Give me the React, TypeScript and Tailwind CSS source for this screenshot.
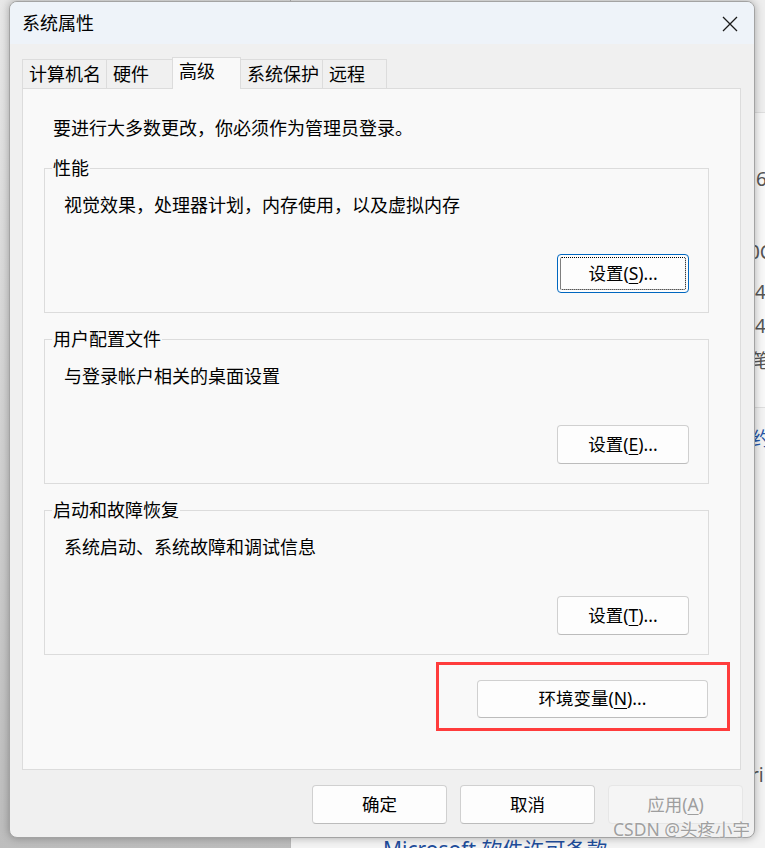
import type { ReactNode } from 'react';

const font = "font-['Noto_Sans','Noto_Sans_CJK_SC',sans-serif]";

const tabs = [
  { label: '计算机名', width: 'w-[85px]' },
  { label: '硬件', width: 'w-[67px]' },
  { label: '高级', width: 'w-[69px]', active: true },
  { label: '系统保护', width: 'w-[83px]' },
  { label: '远程', width: 'w-[65px]' },
];

function Key({ children }: { children: ReactNode }) {
  return <span className="underline decoration-1 underline-offset-[3px]">{children}</span>;
}

function WinButton({
  children,
  className = '',
  focused,
  disabled,
}: {
  children: ReactNode;
  className?: string;
  focused?: boolean;
  disabled?: boolean;
}) {
  const tone = disabled
    ? 'bg-[#f5f5f5] border-[#e6e6e6] text-[#9e9e9e]'
    : focused
      ? 'bg-[#fdfdfd] border-[#0067c0] text-black'
      : 'bg-[#fdfdfd] border-[#d0d0d0] border-b-[#bcbcbc] text-black';
  return (
    <div
      className={`relative flex items-center justify-center rounded-[4px] border text-[17.5px] leading-none ${tone} ${className}`}
    >
      {focused && <div className="absolute inset-[2px] rounded-[2px] border border-dotted border-black" />}
      <span>{children}</span>
    </div>
  );
}

function Group({ title, desc, button }: { title: string; desc: string; button: ReactNode }) {
  return (
    <div className="relative ml-[21px] h-[145px] w-[665px] border border-[#dcdcdc]">
      <div className="absolute left-[7px] top-[-13px] h-[24px] bg-[#f9f9f9] px-[1px] leading-[24px]">{title}</div>
      <div className="mt-[24px] flex h-[24px] items-center pl-[19px]">{desc}</div>
      <div className="mt-[37px] flex justify-end pr-[19px]">{button}</div>
    </div>
  );
}

function BehindWindow() {
  return (
    <div className="absolute left-[290px] top-0 h-[848px] w-[600px] border-l border-[#b8b8b8] bg-[#f8f8f8] text-[19px] leading-none">
      <div className="h-[113px] border-b border-[#dedede] bg-[#eeeeee]" />
      <div className="relative h-[295px] border-b border-[#dedede]">
        <span className="absolute left-[465px] top-[57px] text-[#555]">6</span>
        <span className="absolute left-[458px] top-[130px] text-[#555]">0C</span>
        <span className="absolute left-[464px] top-[170px] text-[#555]">4</span>
        <span className="absolute left-[464px] top-[204px] text-[#555]">4</span>
        <span className={`absolute left-[461px] top-[239px] text-[#555] ${font}`}>笔</span>
      </div>
      <div className="relative h-[440px] bg-[#f3f3f3]">
        <span className={`absolute left-[461px] top-[22px] text-[#2456a8] ${font}`}>约</span>
        <span className="absolute left-[460px] top-[358px] text-[#555]">ri</span>
        <span className={`absolute left-[92px] top-[431px] text-[21px] text-[#1f4e9c] ${font}`}>
          Microsoft 软件许可条款
        </span>
      </div>
    </div>
  );
}

export default function App() {
  return (
    <div className={`relative h-[848px] w-[765px] overflow-hidden bg-gradient-to-b from-[#e8e8e8] to-[#bdbdbd] ${font}`}>
      <BehindWindow />

      <div className="absolute left-[9px] top-[1px] flex h-[837px] w-[746px] flex-col overflow-hidden rounded-[8px] border border-[#a3a3a3] bg-[#f0f0f0] text-[18px] text-black shadow-[0_0_8px_rgba(0,0,0,0.3)]">
        <div className="flex h-[42px] shrink-0 items-center justify-between bg-[#eef3f9] pl-[12px] pr-[16px]">
          <span className="leading-none">系统属性</span>
          <svg width="16" height="16" viewBox="0 0 16 16" className="mt-[1px]">
            <path d="M1 1 L15 15 M15 1 L1 15" stroke="#1a1a1a" strokeWidth="1.3" fill="none" />
          </svg>
        </div>

        <div className="ml-[12px] mt-[13px] flex h-[31px] items-end">
          {tabs.map((t, i) => (
            <div
              key={t.label}
              className={`${t.width} ${i > 0 ? '-ml-px' : ''} flex items-start border-x border-t border-[#dcdcdc] pl-[6px] leading-[24px] ${
                t.active ? 'relative z-10 -mb-px h-[32px] bg-[#f9f9f9] pt-[1px]' : 'h-[29px] bg-[#f0f0f0] pt-[2px]'
              }`}
            >
              {t.label}
            </div>
          ))}
        </div>

        <div className="ml-[12px] flex h-[682px] w-[719px] flex-col border border-[#dcdcdc] bg-[#f9f9f9]">
          <div className="mt-[27px] flex h-[24px] items-center pl-[30px]">要进行大多数更改，你必须作为管理员登录。</div>
          <div className="mt-[28px] flex flex-col gap-[26px]">
            <Group
              title="性能"
              desc="视觉效果，处理器计划，内存使用，以及虚拟内存"
              button={
                <WinButton focused className="h-[39px] w-[132px]">
                  设置(<Key>S</Key>)...
                </WinButton>
              }
            />
            <Group
              title="用户配置文件"
              desc="与登录帐户相关的桌面设置"
              button={
                <WinButton className="h-[39px] w-[132px]">
                  设置(<Key>E</Key>)...
                </WinButton>
              }
            />
            <Group
              title="启动和故障恢复"
              desc="系统启动、系统故障和调试信息"
              button={
                <WinButton className="h-[39px] w-[132px]">
                  设置(<Key>T</Key>)...
                </WinButton>
              }
            />
          </div>
          <div className="mt-[25px] flex justify-end pr-[32px]">
            <WinButton className="h-[38px] w-[231px]">
              环境变量(<Key>N</Key>)...
            </WinButton>
          </div>
        </div>

        <div className="mt-[15px] flex justify-end gap-[13px] pr-[11px]">
          <WinButton className="h-[39px] w-[135px]">确定</WinButton>
          <WinButton className="h-[39px] w-[135px]">取消</WinButton>
          <WinButton disabled className="h-[39px] w-[135px]">
            应用(<Key>A</Key>)
          </WinButton>
        </div>
      </div>

      <div className="absolute left-[436px] top-[662px] h-[69px] w-[294px] border-[3px] border-[#ff3c3c]" />

      <div className="absolute left-[613px] top-[817px] text-[17.5px] leading-[24px] text-[#a0a0a0] [text-shadow:0_0_2px_#ffffff]">
        CSDN @头疼小宇
      </div>
    </div>
  );
}
